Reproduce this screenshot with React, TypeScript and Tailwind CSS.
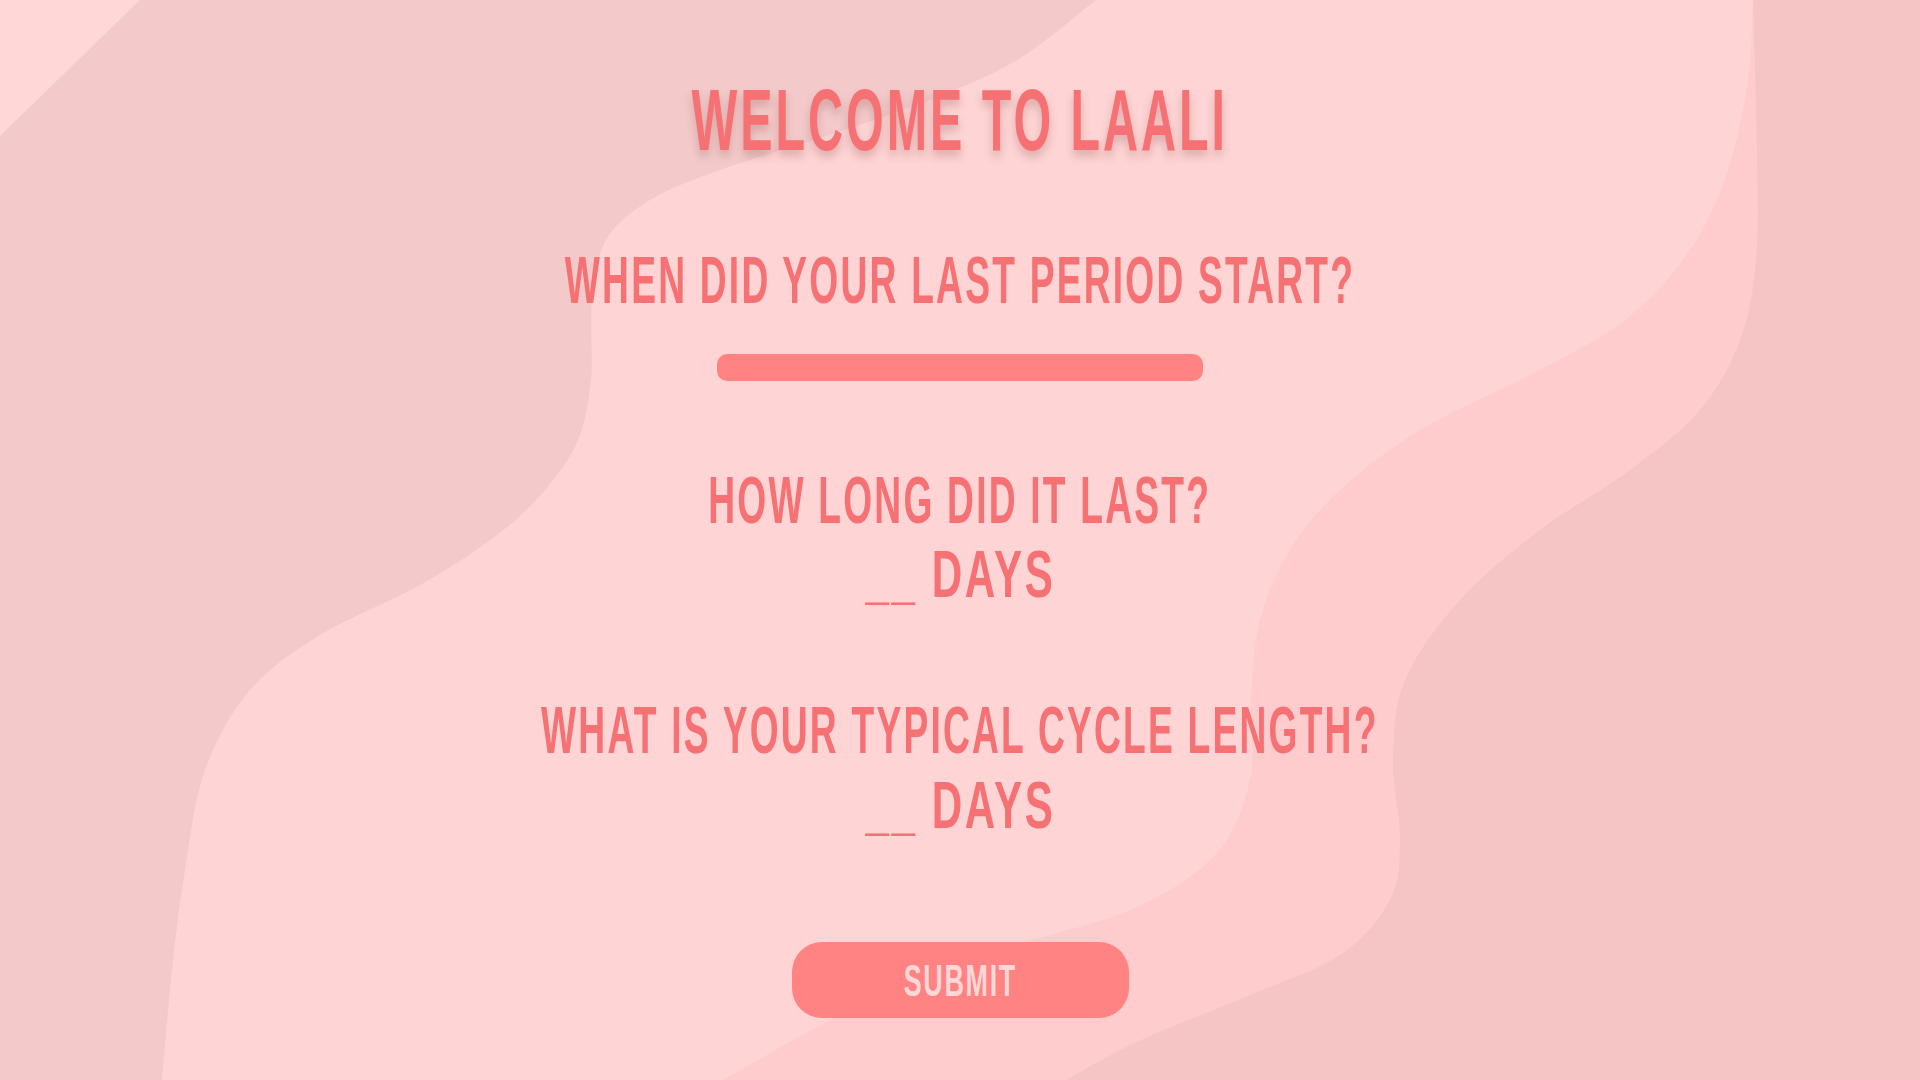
import React from 'react';

type Pt = [number, number];

// catmull-rom through the points, returned as cubic segments (no leading M)
const curveThrough = (pts: Pt[]) => {
  let d = '';
  for (let i = 0; i < pts.length - 1; i++) {
    const p0 = pts[i - 1] || pts[i];
    const p1 = pts[i];
    const p2 = pts[i + 1];
    const p3 = pts[i + 2] || p2;
    const c1 = [p1[0] + (p2[0] - p0[0]) / 6, p1[1] + (p2[1] - p0[1]) / 6];
    const c2 = [p2[0] - (p3[0] - p1[0]) / 6, p2[1] - (p3[1] - p1[1]) / 6];
    d += ` C${c1[0]},${c1[1]} ${c2[0]},${c2[1]} ${p2[0]},${p2[1]}`;
  }
  return d;
};

const leftEdge: Pt[] = [
  [1096, 0], [1017, 60], [930, 100], [820, 138], [720, 170], [650, 200], [606, 240],
  [592, 300], [591, 379], [578, 440], [545, 490], [497, 535], [420, 585], [320, 635],
  [250, 690], [205, 770], [185, 870], [172, 970], [162, 1080],
];

const midEdge: Pt[] = [
  [1753, 0], [1748, 80], [1728, 170], [1690, 250], [1625, 320], [1530, 375], [1420, 430],
  [1340, 490], [1290, 550], [1260, 620], [1251, 700], [1250, 780], [1215, 855],
  [1130, 910], [1000, 950], [860, 1005], [723, 1080],
];

const rightEdge: Pt[] = [
  [1753, 0], [1757, 150], [1756, 260], [1740, 340], [1700, 410], [1630, 470], [1540, 530],
  [1460, 600], [1405, 680], [1393, 760], [1400, 840], [1390, 900], [1340, 955],
  [1250, 995], [1139, 1041], [1066, 1080],
];

const Backdrop = () => (
  <svg
    className="absolute inset-0 h-full w-full"
    viewBox="0 0 1920 1080"
    preserveAspectRatio="none"
  >
    <rect width="1920" height="1080" fill="#fed4d4" />
    <path d="M0,0 L140,0 L0,136 Z" fill="#ffd7d7" />
    <path d={`M140,0 L${leftEdge[0][0]},0${curveThrough(leftEdge)} L0,1080 L0,136 Z`} fill="#f3c9c9" />
    <path d={`M1753,0${curveThrough(midEdge)} L1920,1080 L1920,0 Z`} fill="#ffcccd" />
    <path d={`M1753,0${curveThrough(rightEdge)} L1920,1080 L1920,0 Z`} fill="#f5c4c4" />
  </svg>
);

// narrow display lettering: Arial-width bold squeezed horizontally
const Narrow = ({ children, squeeze = 'scale-x-[0.563]' }: { children: React.ReactNode; squeeze?: string }) => (
  <span className={`inline-block whitespace-nowrap origin-center tracking-[0.06em] ${squeeze}`}>{children}</span>
);

export default function App() {
  return (
    <div
      className="relative h-screen w-full overflow-hidden"
      style={{ fontFamily: '"Liberation Sans", Arial, sans-serif' }}
    >
      <Backdrop />

      <div className="relative flex flex-col items-center pt-[76px] font-bold text-[#f67174]">
        {/* Title */}
        <h1 className="text-[87px] leading-none [text-shadow:0_6px_12px_rgba(150,80,80,0.3)]">
          <Narrow squeeze="scale-x-[0.558]">WELCOME TO LAALI</Narrow>
        </h1>

        {/* Last period start */}
        <p className="mt-[84px] text-[66px] leading-none">
          <Narrow>WHEN DID YOUR LAST PERIOD START?</Narrow>
        </p>
        <div className="mt-[41px] h-[27px] w-[486px] rounded-[10px] bg-[#ff8383]" />

        {/* Duration */}
        <p className="mt-[86px] text-[66px] leading-none">
          <Narrow>HOW LONG DID IT LAST?</Narrow>
        </p>
        <p className="mt-[8px] text-[66px] leading-none">
          <Narrow squeeze="scale-x-[0.64]">__ DAYS</Narrow>
        </p>

        {/* Cycle length */}
        <p className="mt-[90px] text-[66px] leading-none">
          <Narrow>WHAT IS YOUR TYPICAL CYCLE LENGTH?</Narrow>
        </p>
        <p className="mt-[9px] text-[66px] leading-none">
          <Narrow squeeze="scale-x-[0.64]">__ DAYS</Narrow>
        </p>

        <button className="mt-[104px] flex h-[76px] w-[337px] items-center justify-center rounded-[30px] bg-[#ff8383] text-[45px] leading-none text-[#ffd7d7]">
          <Narrow squeeze="scale-x-[0.6]">SUBMIT</Narrow>
        </button>
      </div>
    </div>
  );
}
